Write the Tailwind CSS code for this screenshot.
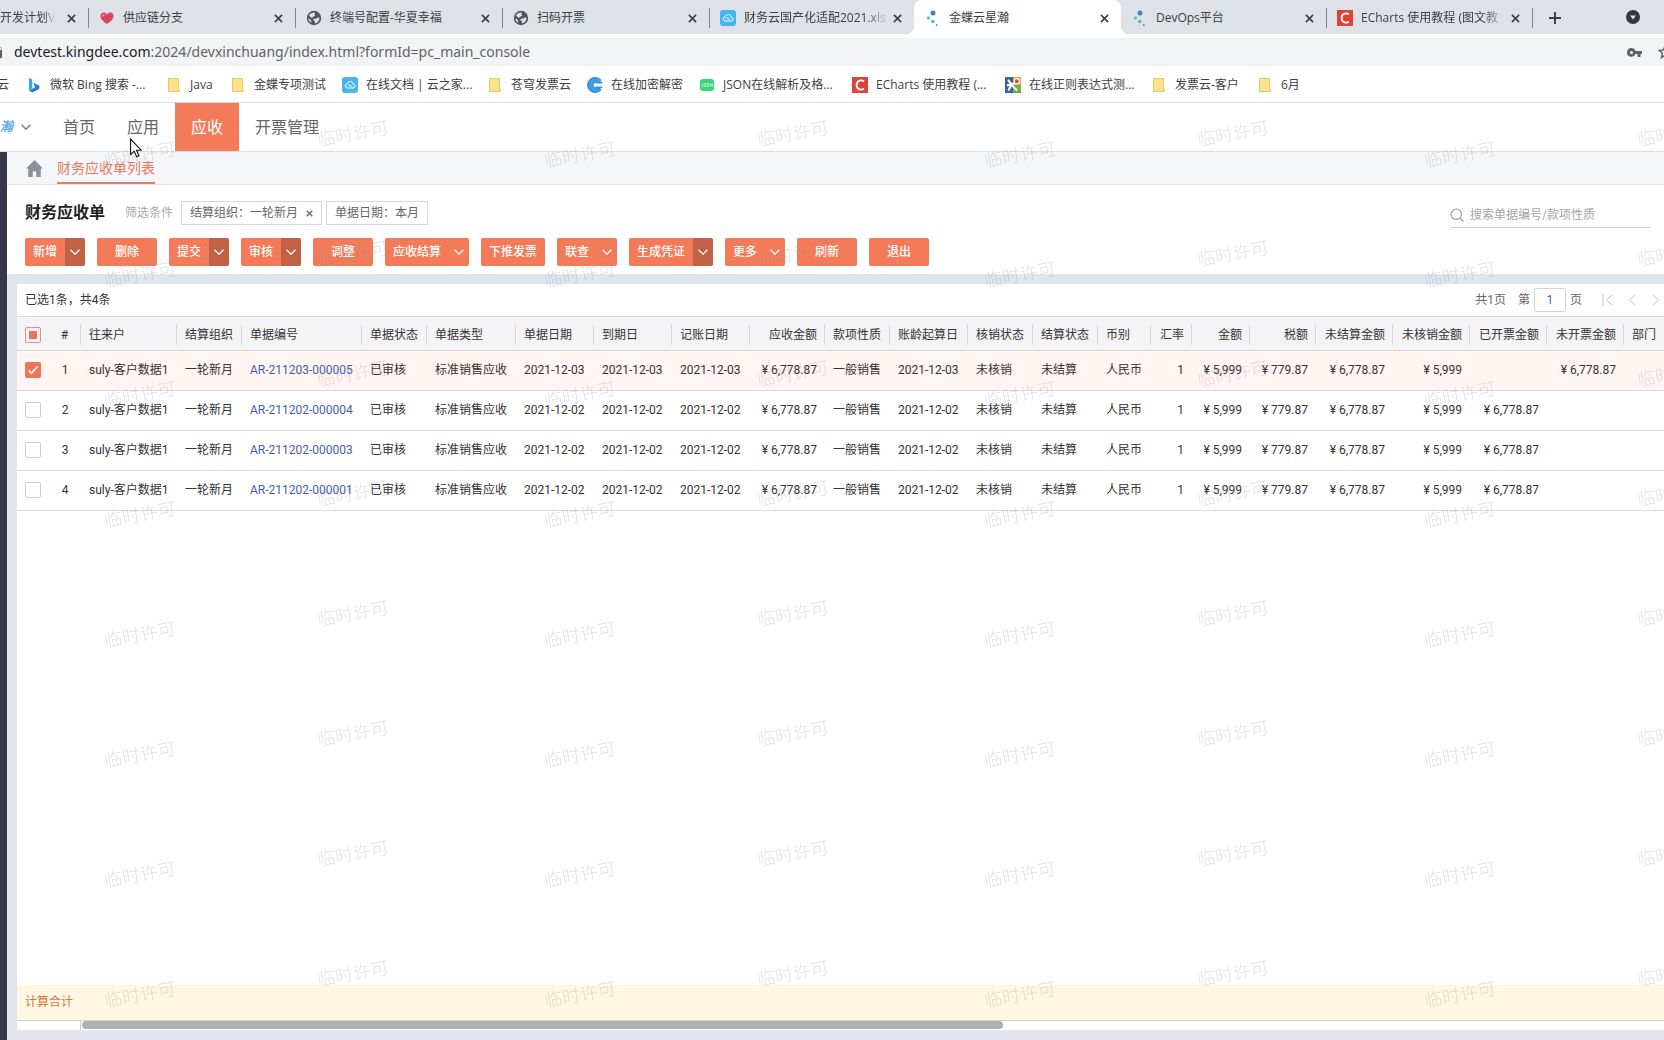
<!DOCTYPE html>
<html lang="zh-CN">
<head>
<meta charset="utf-8">
<title>金蝶云星瀚</title>
<script src="https://cdn.jsdelivr.net/npm/@tailwindcss/browser@4"></script>
</head>
<body class="flex min-h-screen flex-col overflow-x-hidden bg-white text-xs text-[#333] font-[Roboto,'Noto_Sans_CJK_SC',sans-serif]">

<svg class="hidden" aria-hidden="true">
  <symbol id="x" viewBox="0 0 10 10"><path d="M1 1l8 8M9 1l-8 8" stroke="currentColor" stroke-width="1.8" fill="none"/></symbol>
  <symbol id="down" viewBox="0 0 10 6"><path d="M.6.8L5 5.2 9.4.8" stroke="currentColor" stroke-width="1.3" fill="none"/></symbol>
  <symbol id="globe" viewBox="0 0 16 16"><circle cx="8" cy="8" r="7.200" fill="#50545a"/><path d="M3 5.500C4.500 3 7 2.300 8.500 2.600c.8.800-.4 1.600.3 2.300.800.6-.2 1.500-1.200 1.500-.9 0-.8 1.300-1.700 1.300C4.800 7.700 4.200 6.300 3 5.500zM7.500 9c1.500-.8 2.700.2 3.200-.8.4-.9 1.700-.9 2.800-.3-.1 2.600-1.800 4.900-4.300 5.500-.8-.7.200-1.700-.6-2.300C7.900 10.600 6.800 9.800 7.500 9zM2.300 8.300c1.200.6 2.600 1.300 2.800 2.700.1.800.5 1 .4 1.800-1.900-.8-3.100-2.500-3.200-4.500z" fill="#dee1e6"/></symbol>
  <symbol id="heart" viewBox="0 0 16 16"><path d="M8 14C3 10.500 1.500 8.500 1.500 6a3.400 3.400 0 0 1 6.500-1.500A3.400 3.400 0 0 1 14.500 6c0 2.500-1.500 4.500-6.500 8z" fill="#d9455f"/><path d="M3.500 6.500a2 2 0 0 1 2-2" stroke="#f3a0ae" stroke-width="1.200" fill="none"/></symbol>
  <symbol id="cloud" viewBox="0 0 16 16"><rect width="16" height="16" rx="3" fill="#45b4f0"/><path d="M5 11h6a2 2 0 0 0 .3-4A3.200 3.200 0 0 0 5.200 6.500 2.300 2.300 0 0 0 5 11zM5.500 8.300q1.500-1 2.500.3t2.500.2" fill="none" stroke="#fff" stroke-width="1"/></symbol>
  <symbol id="dots" viewBox="0 0 16 16"><circle cx="8" cy="3" r="2.500" fill="#3d84c4"/><circle cx="3.400" cy="8" r="1.700" fill="#4cc9d8"/><circle cx="7.800" cy="11.500" r="1.800" fill="#45c0b8"/><circle cx="11.800" cy="15" r="1" fill="#7a7fd0"/></symbol>
  <symbol id="c-red" viewBox="0 0 16 16"><rect width="16" height="16" fill="#dd4338"/><path d="M12 4.200C8.500 2 4.600 4.300 4.600 8s3.900 6 7.400 3.800" fill="none" stroke="#fff" stroke-width="1.800"/></symbol>
  <symbol id="folder" viewBox="0 0 16 16"><path d="M2.500 1.500h10v9l1 4h-11z" fill="#fbe38e" stroke="#e8c95e"/><path d="M11 14.500l1.500-4.500 1.200 4.500z" fill="#f3d368"/></symbol>
  <symbol id="bing" viewBox="0 0 16 16"><path d="M3 1l3.200 1.300v9.200L3 14z" fill="#35a7e8"/><path d="M7.300 5.500l6 3.200c.8 2-.3 3.600-1.800 4.300L6.500 15.500 3 13.800 9 10.200z" fill="#2b7fdc"/></symbol>
  <symbol id="c-blue" viewBox="0 0 16 16"><path d="M14 3.200A7.600 7.600 0 1 0 14 12.800L12 10.500H8.500a2.500 2.500 0 0 1 0-5H12z" fill="#3a9bea" stroke="#2474bd" stroke-width=".8"/><path d="M9 5.600h6.300M9 10.400h6.300" stroke="#2f8fe0" stroke-width="1.600"/></symbol>
  <symbol id="json" viewBox="0 0 16 16"><rect x="1" y="2" width="14" height="12" rx="3" fill="#35d778"/><path d="M3.500 6.500v3h-1M6.500 6.500H5V8h1.500v1.500H5M8 6.500h1.800v3H8zM11.500 9.500v-3l1.800 3v-3" stroke="#c9fadd" fill="none" stroke-width=".8"/></symbol>
  <symbol id="regex" viewBox="0 0 16 16"><path d="M0 0h8v16H0z" fill="#3d61a8"/><path d="M8 0h8v8H8z" fill="#f0a13c"/><path d="M8 8h8v8H8z" fill="#6fb03f"/><circle cx="11.800" cy="4.300" r="2.600" fill="#e0453c" stroke="#fff" stroke-width="1.200"/><path d="M3 3l3.500 4L2 8.500M6.500 7l-3 6.500M7 8.500l5 5M7 7.500l3-1.500" stroke="#fff" stroke-width="2" fill="none"/></symbol>
</svg>

<header class="flex flex-col">
  <div class="flex h-[34px] overflow-hidden bg-[#dee1e6] text-[#3c4043] font-['Open_Sans','Noto_Sans_CJK_SC',sans-serif]">
    <nav aria-label="标签页" class="flex shrink-0">
      <div class="flex w-[88px] items-center justify-between pt-0.5 pr-2.5">
        <span class="whitespace-nowrap [mask-image:linear-gradient(to_right,#000_80%,transparent)]">开发计划V</span>
        <button aria-label="关闭" class="p-0.5"><svg class="size-[9px]"><use href="#x"/></svg></button>
      </div>
      <div class="flex w-[207px] items-center gap-2 pt-0.5 pr-2.5">
        <span class="h-5 w-px bg-[#808388]"></span><svg class="ml-0.5 size-4 shrink-0"><use href="#heart"/></svg>
        <span class="min-w-0 flex-1 whitespace-nowrap">供应链分支</span>
        <button aria-label="关闭" class="p-0.5"><svg class="size-[9px]"><use href="#x"/></svg></button>
      </div>
      <div class="flex w-[207px] items-center gap-2 pt-0.5 pr-2.5">
        <span class="h-5 w-px bg-[#808388]"></span><svg class="ml-0.5 size-4 shrink-0"><use href="#globe"/></svg>
        <span class="min-w-0 flex-1 whitespace-nowrap">终端号配置-华夏幸福</span>
        <button aria-label="关闭" class="p-0.5"><svg class="size-[9px]"><use href="#x"/></svg></button>
      </div>
      <div class="flex w-[207px] items-center gap-2 pt-0.5 pr-2.5">
        <span class="h-5 w-px bg-[#808388]"></span><svg class="ml-0.5 size-4 shrink-0"><use href="#globe"/></svg>
        <span class="min-w-0 flex-1 whitespace-nowrap">扫码开票</span>
        <button aria-label="关闭" class="p-0.5"><svg class="size-[9px]"><use href="#x"/></svg></button>
      </div>
      <div class="flex w-[205px] items-center gap-2 pt-0.5 pr-2.5">
        <span class="h-5 w-px bg-[#808388]"></span><svg class="ml-0.5 size-4 shrink-0"><use href="#cloud"/></svg>
        <span class="-mr-1.5 min-w-0 flex-1 whitespace-nowrap [mask-image:linear-gradient(to_right,#000_84%,transparent)]">财务云国产化适配2021.xls</span>
        <button aria-label="关闭" class="p-0.5"><svg class="size-[9px]"><use href="#x"/></svg></button>
      </div>
      <div class="relative flex w-[207px] items-center gap-2 rounded-t-lg bg-white pt-0.5 pr-2.5 before:absolute before:bottom-0 before:-left-2 before:size-2 before:bg-[radial-gradient(circle_at_0_0,transparent_8px,white_8px)] after:absolute after:-right-2 after:bottom-0 after:size-2 after:bg-[radial-gradient(circle_at_100%_0,transparent_8px,white_8px)]">
        <span class="h-5 w-px"></span><svg class="ml-0.5 size-4 shrink-0"><use href="#dots"/></svg>
        <span class="min-w-0 flex-1 whitespace-nowrap">金蝶云星瀚</span>
        <button aria-label="关闭" class="p-0.5"><svg class="size-[9px]"><use href="#x"/></svg></button>
      </div>
      <div class="flex w-[205px] items-center gap-2 pt-0.5 pr-2.5">
        <span class="h-5 w-px"></span><svg class="ml-0.5 size-4 shrink-0"><use href="#dots"/></svg>
        <span class="min-w-0 flex-1 whitespace-nowrap">DevOps平台</span>
        <button aria-label="关闭" class="p-0.5"><svg class="size-[9px]"><use href="#x"/></svg></button>
      </div>
      <div class="flex w-[206px] items-center gap-2 pt-0.5 pr-2.5">
        <span class="h-5 w-px bg-[#808388]"></span><svg class="ml-0.5 size-4 shrink-0"><use href="#c-red"/></svg>
        <span class="-mr-1.5 min-w-0 flex-1 whitespace-nowrap [mask-image:linear-gradient(to_right,#000_82%,transparent)]">ECharts 使用教程 (图文教</span>
        <button aria-label="关闭" class="p-0.5"><svg class="size-[9px]"><use href="#x"/></svg></button>
      </div>
      <div class="flex items-center gap-4 pt-0.5"><span class="h-5 w-px bg-[#808388]"></span>
        <button aria-label="新标签页"><svg class="size-3" viewBox="0 0 12 12"><path d="M6 0v12M0 6h12" stroke="#3c4043" stroke-width="2"/></svg></button>
      </div>
    </nav>
    <button aria-label="搜索标签页" class="mr-6 ml-auto"><svg class="size-[14px]" viewBox="0 0 14 14"><circle cx="7" cy="7" r="7" fill="#33363b"/><path d="M4 5.500h6L7 9.500z" fill="#dee1e6"/></svg></button>
  </div>

  <div class="mt-1 flex h-7 items-center overflow-hidden bg-[#f1f3f4] text-[14px] font-['Noto_Sans',sans-serif]">
    <svg class="h-3 w-[3px] shrink-0" viewBox="0 0 3 12"><path d="M0 4h2v8H0zM0 1q1.500 0 1.500 3" fill="#5f6368"/></svg>
    <div class="ml-[11px] whitespace-nowrap text-[#5f6368]"><span class="text-[#202124]">devtest.kingdee.com</span>:2024/devxinchuang/index.html?formId=pc_main_console</div>
    <svg class="ml-auto h-[9px] w-[15px] shrink-0" viewBox="0 0 15 9"><path d="M4.500 0a4.400 4.400 0 1 0 4 6.100h2V9h3V6.100H15V3H8.500A4.400 4.400 0 0 0 4.500 0zm0 3a1.500 1.500 0 1 1 0 3 1.500 1.500 0 0 1 0-3z" fill="#5f6368" fill-rule="evenodd"/></svg>
    <svg class="ml-4 h-3.5 w-[6px] shrink-0" viewBox="0 0 6 14"><path d="M7 1L5.300 5 1 5.300l3.400 2.900L3.300 12.700 7 10.300" fill="none" stroke="#5f6368" stroke-width="1.400"/></svg>
  </div>

  <nav aria-label="书签" class="flex h-[37px] items-center overflow-hidden border-b border-[#dadce0] pt-0.5 whitespace-nowrap text-[#3c4043] font-['Open_Sans','Noto_Sans_CJK_SC',sans-serif]">
    <a href="#" class="-ml-[3px] w-[29px] shrink-0">云</a>
    <a href="#" class="flex w-[140px] shrink-0 items-center gap-2"><svg class="size-4"><use href="#bing"/></svg>微软 Bing 搜索 -...</a>
    <a href="#" class="flex w-16 shrink-0 items-center gap-2"><svg class="size-4"><use href="#folder"/></svg>Java</a>
    <a href="#" class="flex w-28 shrink-0 items-center gap-2"><svg class="size-4"><use href="#folder"/></svg>金蝶专项测试</a>
    <a href="#" class="flex w-[145px] shrink-0 items-center gap-2"><svg class="size-4"><use href="#cloud"/></svg>在线文档 | 云之家...</a>
    <a href="#" class="flex w-[100px] shrink-0 items-center gap-2"><svg class="size-4"><use href="#folder"/></svg>苍穹发票云</a>
    <a href="#" class="flex w-[112px] shrink-0 items-center gap-2"><svg class="size-4"><use href="#c-blue"/></svg>在线加密解密</a>
    <a href="#" class="flex w-[153px] shrink-0 items-center gap-2"><svg class="size-4"><use href="#json"/></svg>JSON在线解析及格...</a>
    <a href="#" class="flex w-[153px] shrink-0 items-center gap-2"><svg class="size-4"><use href="#c-red"/></svg>ECharts 使用教程 (...</a>
    <a href="#" class="flex w-[146px] shrink-0 items-center gap-2"><svg class="size-4"><use href="#regex"/></svg>在线正则表达式测...</a>
    <a href="#" class="flex w-[106px] shrink-0 items-center gap-2"><svg class="size-4"><use href="#folder"/></svg>发票云-客户</a>
    <a href="#" class="flex shrink-0 items-center gap-2"><svg class="size-4"><use href="#folder"/></svg>6月</a>
  </nav>
</header>

<div class="relative flex flex-1 flex-col overflow-hidden">
  <nav aria-label="主导航" class="flex h-[49px] border-b border-[#dcdde1] text-base text-[#666]">
    <button class="flex w-[47px] items-center gap-2 text-[13px] font-bold text-[#5aa9f0] italic">瀚<svg class="h-1.5 w-[10px] text-[#777]"><use href="#down"/></svg></button>
    <a href="#" class="flex items-center px-4 pt-0.5">首页</a>
    <a href="#" class="flex items-center px-4 pt-0.5">应用</a>
    <a href="#" aria-current="page" class="flex items-center bg-[#f37b59] px-4 pt-0.5 text-white">应收</a>
    <a href="#" class="flex items-center px-4 pt-0.5">开票管理</a>
  </nav>

  <div class="flex flex-1">
    <aside class="w-[7px] shrink-0 bg-[#383749]"></aside>
    <div class="flex min-w-0 flex-1 flex-col bg-[#e1e5ef]">
      <nav aria-label="页签" class="flex h-[33px] items-center gap-3.5 border-b border-[#e1e3e8] bg-[#f5f6fa] pl-[19px]">
        <a href="#" aria-label="主页"><svg class="size-[17px]" viewBox="0 0 17 17"><path d="M8.500 0L17 8.500h-2.200V17h-4.600v-5.500H6.800V17H2.200V8.500H0z" fill="#8f9196"/></svg></a>
        <a href="#" class="flex h-8 items-center border-b-2 border-[#e87a5e] pt-0.5 text-sm text-[#e87a5e]">财务应收单列表</a>
      </nav>

      <section class="flex flex-col gap-[13px] bg-white pt-4 pr-3.5 pb-2 pl-[18px]">
        <div class="flex h-6 items-center">
          <h1 class="text-base font-bold text-[#222]">财务应收单</h1>
          <span class="ml-5 text-[#aaa]">筛选条件</span>
          <span class="ml-2 flex h-6 items-center gap-2 border border-[#d5d7dc] px-2 text-[#666]">结算组织：一轮新月<button aria-label="移除条件"><svg class="size-[7px]"><use href="#x"/></svg></button></span>
          <span class="ml-1 flex h-6 items-center border border-[#d5d7dc] px-2 text-[#666]">单据日期：本月</span>
          <label class="mt-1 ml-auto flex h-[26px] w-[200px] items-center gap-1.5 border-b border-[#cfd1d5]">
            <svg class="size-[14px] shrink-0" viewBox="0 0 14 14"><circle cx="6.200" cy="6.200" r="5.200" fill="none" stroke="#999" stroke-width="1.100"/><path d="M10 10l3.500 3.500" stroke="#999" stroke-width="1.100"/></svg>
            <input type="text" aria-label="搜索" placeholder="搜索单据编号/款项性质" class="min-w-0 flex-1 outline-none placeholder:text-[#a5a5a5]">
          </label>
        </div>
        <div class="flex h-7 gap-3 font-medium text-white">
          <div class="flex w-[60px] overflow-hidden rounded-xs bg-[#f37b59]"><button class="flex-1">新增</button><button aria-label="展开" class="grid w-5 place-items-center bg-[#c36147]"><svg class="h-1.5 w-[10px]"><use href="#down"/></svg></button></div>
          <button class="w-[60px] rounded-xs bg-[#f37b59]">删除</button>
          <div class="flex w-[60px] overflow-hidden rounded-xs bg-[#f37b59]"><button class="flex-1">提交</button><button aria-label="展开" class="grid w-5 place-items-center bg-[#c36147]"><svg class="h-1.5 w-[10px]"><use href="#down"/></svg></button></div>
          <div class="flex w-[60px] overflow-hidden rounded-xs bg-[#f37b59]"><button class="flex-1">审核</button><button aria-label="展开" class="grid w-5 place-items-center bg-[#c36147]"><svg class="h-1.5 w-[10px]"><use href="#down"/></svg></button></div>
          <button class="w-[60px] rounded-xs bg-[#f37b59]">调整</button>
          <button class="flex w-[84px] items-center justify-between rounded-xs bg-[#f37b59] pr-[5px] pl-2">应收结算<svg class="h-1.5 w-[10px]"><use href="#down"/></svg></button>
          <button class="w-16 rounded-xs bg-[#f37b59]">下推发票</button>
          <button class="flex w-[60px] items-center justify-between rounded-xs bg-[#f37b59] pr-[5px] pl-2">联查<svg class="h-1.5 w-[10px]"><use href="#down"/></svg></button>
          <div class="flex w-[84px] overflow-hidden rounded-xs bg-[#f37b59]"><button class="flex-1">生成凭证</button><button aria-label="展开" class="grid w-5 place-items-center bg-[#c36147]"><svg class="h-1.5 w-[10px]"><use href="#down"/></svg></button></div>
          <button class="flex w-[60px] items-center justify-between rounded-xs bg-[#f37b59] pr-[5px] pl-2">更多<svg class="h-1.5 w-[10px]"><use href="#down"/></svg></button>
          <button class="w-[60px] rounded-xs bg-[#f37b59]">刷新</button>
          <button class="w-[60px] rounded-xs bg-[#f37b59]">退出</button>
        </div>
      </section>

      <main class="mt-2.5 mb-2.5 ml-2.5 flex flex-1 flex-col bg-white">
        <div class="flex h-8 items-center pr-1 pl-2">
          <span>已选1条，共4条</span>
          <div class="ml-auto flex items-center text-[#666]">
            <span>共1页</span>
            <label for="pg" class="ml-3">第</label>
            <input id="pg" type="text" value="1" class="mx-1 h-6 w-8 rounded-xs border border-[#d0d3d9] text-center text-[#276ea8]">
            <span>页</span>
            <button aria-label="首页" class="ml-5"><svg class="h-3 w-[11px]" viewBox="0 0 11 12"><path d="M1 0v12M10 1L4.500 6l5.500 5" fill="none" stroke="#c4c6ca"/></svg></button>
            <button aria-label="上一页" class="ml-[15px]"><svg class="h-3 w-2" viewBox="0 0 8 12"><path d="M7 1L1.500 6 7 11" fill="none" stroke="#c4c6ca"/></svg></button>
            <button aria-label="下一页" class="ml-4"><svg class="h-3 w-2" viewBox="0 0 8 12"><path d="M1 1l5.500 5L1 11" fill="none" stroke="#c4c6ca"/></svg></button>
          </div>
        </div>
        <table class="w-full table-fixed border-collapse whitespace-nowrap">
          <thead><tr id="head" class="h-[34px] border-y border-[#d9dade] bg-[#f4f4f6]"></tr></thead>
          <tbody id="rows"></tbody>
        </table>
        <div class="mt-auto flex h-9 items-center border-b border-[#cfcfd2] bg-[#fff7e1] pb-0.5 pl-2"><a href="#" class="text-[#d9734a]">计算合计</a></div>
        <div class="flex h-[9px]">
          <div class="w-16 shrink-0 border-r border-[#cfcfd2]"></div>
          <div class="flex-1 pl-px"><div class="h-2 rounded-full bg-[#b0b0b0]" style="width:58.2%"></div></div>
        </div>
      </main>
    </div>
  </div>

  <svg class="pointer-events-none absolute inset-0 h-full w-full" aria-hidden="true">
    <defs><pattern id="wm" width="440" height="120" patternUnits="userSpaceOnUse">
      <g class="fill-[#8c7f94]/25 text-[18px] font-light" text-anchor="middle">
        <text transform="translate(354 37) rotate(-10)">临时许可</text>
        <text transform="translate(141 58) rotate(-10)">临时许可</text>
      </g>
    </pattern></defs>
    <rect width="100%" height="100%" fill="url(#wm)"/>
  </svg>
  <svg class="pointer-events-none absolute top-[35px] left-[130px] h-5 w-3" viewBox="0 0 12 20" aria-hidden="true"><path d="M.6 1v15.500l3.600-3.400 2.400 5.600 2.300-1-2.400-5.400h4.900z" fill="#fff" stroke="#111" stroke-width="1.100"/></svg>
</div>

<script>
// [title, width, align right]
const columns = [
  ['往来户', 96], ['结算组织', 65], ['单据编号', 120], ['单据状态', 65], ['单据类型', 89],
  ['单据日期', 78], ['到期日', 78], ['记账日期', 78], ['应收金额', 75, 1], ['款项性质', 65],
  ['账龄起算日', 78], ['核销状态', 65], ['结算状态', 65], ['币别', 53], ['汇率', 41, 1],
  ['金额', 58, 1], ['税额', 66, 1], ['未结算金额', 77, 1], ['未核销金额', 77, 1],
  ['已开票金额', 77, 1], ['未开票金额', 77, 1], ['部门', 0]
];
const bills = [
  ['AR-211203-000005', '2021-12-03', '', '¥ 6,778.87'],
  ['AR-211202-000004', '2021-12-02', '¥ 6,778.87', ''],
  ['AR-211202-000003', '2021-12-02', '¥ 6,778.87', ''],
  ['AR-211202-000001', '2021-12-02', '¥ 6,778.87', '']
];
document.getElementById('head').innerHTML =
  `<th class="w-8 pt-0.5 pl-2"><label class="relative block size-4"><input type="checkbox" aria-label="全选" class="block size-4 appearance-none rounded-xs border border-[#e58a8a]"><span class="absolute inset-1 bg-[#ee7558]"></span></label></th>
   <th class="w-8 p-0 pt-0.5 font-normal"><div class="flex h-5 items-center justify-center border-r border-[#d3d5da]">#</div></th>` +
  columns.map(([t, w, r]) =>
    `<th class="p-0 pt-0.5 font-normal" ${w ? `style="width:${w}px"` : ''}><div class="${r ? 'flex h-5 items-center justify-end border-r border-[#d3d5da] pr-[7px]' : w ? 'flex h-5 items-center border-r border-[#d3d5da] pl-2' : 'flex h-5 items-center pl-2'}">${t}</div></th>`).join('');
document.getElementById('rows').innerHTML = bills.map(([no, date, billed, unbilled], i) => {
  const cells = ['suly-客户数据1', '一轮新月', `<a href="#" class="text-[#4260a8]">${no}</a>`, '已审核', '标准销售应收',
    date, date, date, '¥ 6,778.87', '一般销售', date, '未核销', '未结算', '人民币', '1',
    '¥ 5,999', '¥ 779.87', '¥ 6,778.87', '¥ 5,999', billed, unbilled, ''];
  const box = i === 0
    ? '<input type="checkbox" checked aria-label="选择第1行" class="block size-4 appearance-none rounded-xs bg-[#ee7558]"><svg class="absolute inset-0 size-4" viewBox="0 0 16 16"><path d="M3.500 8l3 3.200L12.500 4.500" fill="none" stroke="#fff" stroke-width="1.600"/></svg>'
    : `<input type="checkbox" aria-label="选择第${i + 1}行" class="block size-4 appearance-none rounded-xs border border-[#c9cbd0] bg-white">`;
  return `<tr class="${i === 0 ? 'h-10 border-b border-[#d9dade] bg-[#fff5f2]' : 'h-10 border-b border-[#d9dade]'}">
    <td class="pb-0.5 pl-2"><label class="relative block size-4">${box}</label></td><td class="pb-0.5 text-center">${i + 1}</td>` +
    cells.map((c, k) => `<td class="${columns[k][2] ? 'pr-2 pb-0.5 text-right' : 'pb-0.5 pl-2'}">${c}</td>`).join('') + '</tr>';
}).join('');
</script>
</body>
</html>
